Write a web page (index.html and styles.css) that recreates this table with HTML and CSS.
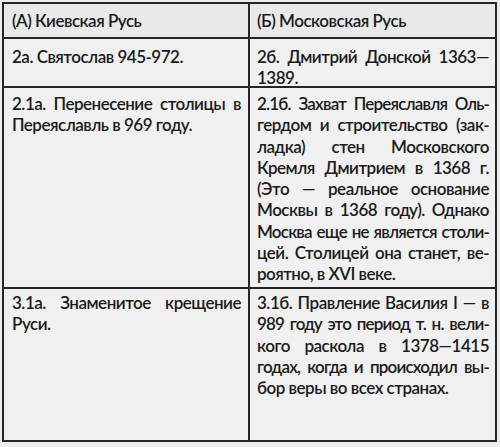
FILE: index.html
```html
<!DOCTYPE html>
<html lang="ru">
<head>
<meta charset="utf-8">
<title>Киевская Русь и Московская Русь</title>
<link rel="stylesheet" href="styles.css">
</head>
<body>
<div class="table">
  <div class="cell head left"><span class="ln last">(А) Киевская Русь</span></div>
  <div class="cell head right"><span class="ln last">(Б) Московская Русь</span></div>

  <div class="cell r2 left"><span class="ln last">2а. Святослав 945-972.</span></div>
  <div class="cell r2 right">
    <span class="ln">2б. Дмитрий Донской 1363—</span>
    <span class="ln last">1389.</span>
  </div>

  <div class="cell r3 left">
    <span class="ln">2.1а. Перенесение столицы в</span>
    <span class="ln last">Переяславль в 969 году.</span>
  </div>
  <div class="cell r3 right">
    <span class="ln tight">2.1б. Захват Переяславля Оль-</span>
    <span class="ln">гердом и строительство (зак-</span>
    <span class="ln">ладка) стен Московского</span>
    <span class="ln">Кремля Дмитрием в 1368 г.</span>
    <span class="ln">(Это — реальное основание</span>
    <span class="ln">Москвы в 1368 году). Однако</span>
    <span class="ln tight">Москва еще не является столи-</span>
    <span class="ln">цей. Столицей она станет, ве-</span>
    <span class="ln last">роятно, в XVI веке.</span>
  </div>

  <div class="cell r4 left">
    <span class="ln">3.1а. Знаменитое крещение</span>
    <span class="ln last">Руси.</span>
  </div>
  <div class="cell r4 right">
    <span class="ln">3.1б. Правление Василия I — в</span>
    <span class="ln tight">989 году это период т. н. вели-</span>
    <span class="ln">кого раскола в 1378—1415</span>
    <span class="ln tight">годах, когда и происходил вы-</span>
    <span class="ln last">бор веры во всех странах.</span>
  </div>
</div>
</body>
</html>
```
FILE: styles.css
```css
html, body {
  margin: 0;
  padding: 0;
  background: #ececec;
}

body {
  width: 500px;
  height: 447px;
  overflow: hidden;
  font-family: "Lato", "Noto Sans", sans-serif;
  font-size: 17px;
  font-weight: 600;
  letter-spacing: -0.5px;
  color: #1b1b1b;
}

.table {
  margin: 2px 0 0 2px;
  width: 495px;
  box-sizing: border-box;
  border: 2px solid #262626;
  display: grid;
  grid-template-columns: 246px 245px;
  grid-template-rows: 35px 49px 201px 151px;
  background: #f0f0f0;
}

.cell {
  box-sizing: border-box;
  border-bottom: 2px solid #262626;
  line-height: 21.3px;
}

.cell.left {
  border-right: 2px solid #262626;
  padding-left: 8px;
  padding-right: 7px;
}

.cell.right {
  padding-left: 7px;
  padding-right: 6px;
}

.cell.r4 {
  border-bottom: none;
}

.head {
  background: #e9e9e9;
  padding-top: 6px;
}

.r2 { padding-top: 7px; }
.r3 { padding-top: 5px; }
.r4 { padding-top: 3px; }

.ln {
  display: block;
  text-align: justify;
  text-align-last: justify;
}

.ln.last {
  text-align: left;
  text-align-last: left;
}

.ln.tight {
  letter-spacing: -0.8px;
}
```
